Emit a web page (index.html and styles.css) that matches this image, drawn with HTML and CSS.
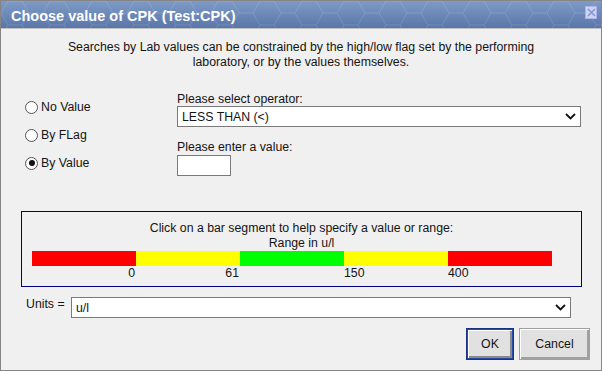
FILE: index.html
```html
<!DOCTYPE html>
<html lang="en">

<head>
    <meta charset="UTF-8">
    <meta name="viewport" content="width=device-width, initial-scale=1.0">
    <title>Choose value of CPK</title>
    <link rel="stylesheet" href="styles.css">
</head>

<body>
    <div class="window">
        <div class="titlebar">
            <span class="title">Choose value of CPK (Test:CPK)</span>
            <span class="close">
                <svg width="9" height="9" viewBox="0 0 9 9">
                    <path d="M1 1 L8 8 M8 1 L1 8" stroke="#7d8fd8" stroke-width="1.4" fill="none"/>
                </svg>
            </span>
        </div>

        <div class="content">
            <p class="intro">Searches by Lab values can be constrained by the high/low flag set by the performing<br>laboratory, or by the values themselves.</p>

            <div class="options">
                <div class="radios">
                    <div class="radio-row"><span class="radio"></span>No Value</div>
                    <div class="radio-row"><span class="radio"></span>By FLag</div>
                    <div class="radio-row"><span class="radio checked"></span>By Value</div>
                </div>
                <div class="fields">
                    <div class="field-label">Please select operator:</div>
                    <div class="select">
                        <span>LESS THAN (&lt;)</span>
                        <svg width="11" height="7" viewBox="0 0 11 7">
                            <path d="M1 1 L5.5 5.5 L10 1" stroke="#111" stroke-width="1.8" fill="none"/>
                        </svg>
                    </div>
                    <div class="field-label second">Please enter a value:</div>
                    <div class="value-input"></div>
                </div>
            </div>

            <div class="range-box">
                <div class="range-text">Click on a bar segment to help specify a value or range:</div>
                <div class="range-text">Range in u/l</div>
                <div class="bar">
                    <span class="seg red"></span>
                    <span class="seg yellow"></span>
                    <span class="seg green"></span>
                    <span class="seg yellow"></span>
                    <span class="seg red"></span>
                </div>
                <div class="bar-labels">
                    <span class="right">0</span>
                    <span class="right">61</span>
                    <span></span>
                    <span>150</span>
                    <span>400</span>
                </div>
            </div>

            <div class="units-row">
                <span class="units-label">Units =</span>
                <div class="select units">
                    <span>u/l</span>
                    <svg width="11" height="7" viewBox="0 0 11 7">
                        <path d="M1 1 L5.5 5.5 L10 1" stroke="#111" stroke-width="1.8" fill="none"/>
                    </svg>
                </div>
            </div>

            <div class="buttons">
                <button class="btn default">OK</button>
                <button class="btn">Cancel</button>
            </div>
        </div>
    </div>
</body>

</html>
```

FILE: styles.css
```css
body {
    margin: 0;
    font-family: "Liberation Sans", Arial, sans-serif;
    font-size: 12.3px;
    color: #141414;
}

.window {
    width: 602px;
    height: 371px;
    box-sizing: border-box;
    border: 1px solid #858585;
    background-color: #f0f0f0;
    display: flex;
    flex-direction: column;
}

.titlebar {
    height: 27px;
    display: flex;
    align-items: center;
    padding: 0 4px 0 10px;
    border-bottom: 1px solid #c2c2c2;
    background-color: #6784b5;
    background-image:
        url("data:image/svg+xml,%3Csvg xmlns='http://www.w3.org/2000/svg' width='42' height='24'%3E%3Cpath d='M0 12 L7 0 H21 L28 12 L21 24 H7 Z M28 12 H42' stroke='%23ffffff' stroke-opacity='0.12' fill='none'/%3E%3C/svg%3E"),
        linear-gradient(#7e9bc7, #5a76a9);
}

.title {
    color: #fff;
    font-weight: bold;
    font-size: 14.5px;
    margin-top: 2px;
}

.close {
    margin-left: auto;
    align-self: flex-start;
    margin-top: 5px;
    width: 10px;
    height: 11px;
    border: 1px solid #a9b4e8;
    background-color: #cdd4f2;
    display: flex;
    align-items: center;
    justify-content: center;
}

.content {
    flex: 1;
    padding-top: 11px;
    display: flex;
    flex-direction: column;
}

.intro {
    margin: 0;
    text-align: center;
    line-height: 15px;
}

.options {
    display: flex;
    margin-top: 23px;
    height: 84px;
}

.radios {
    width: 176px;
    box-sizing: border-box;
    padding-left: 24px;
}

.radio-row {
    height: 28px;
    display: flex;
    align-items: center;
    gap: 3px;
}

.radio {
    width: 11px;
    height: 11px;
    border: 1px solid #555;
    border-radius: 50%;
    background-color: #fff;
    display: flex;
    align-items: center;
    justify-content: center;
}

.radio.checked::after {
    content: "";
    width: 6px;
    height: 6px;
    border-radius: 50%;
    background-color: #111;
}

.fields {
    width: 404px;
}

.field-label {
    line-height: 13px;
}

.field-label.second {
    margin-top: 13px;
    line-height: 14px;
    margin-bottom: 1px;
}

.select {
    height: 21px;
    box-sizing: border-box;
    border: 1px solid #7a7a7a;
    background-color: #fff;
    display: flex;
    align-items: center;
    justify-content: space-between;
    padding: 0 4px 0 4px;
}

.value-input {
    width: 54px;
    height: 21px;
    box-sizing: border-box;
    border: 1px solid #7a7a7a;
    background-color: #fff;
}

.range-box {
    margin: 34px 0 0 20px;
    width: 561px;
    box-sizing: border-box;
    border: 1px solid #00007f;
    padding: 9px 0 6px;
}

.range-text {
    text-align: center;
    line-height: 15px;
}

.bar {
    display: flex;
    margin-left: 10px;
    height: 15px;
}

.seg {
    width: 104px;
}

.red {
    background-color: #ff0000;
}

.yellow {
    background-color: #ffff00;
}

.green {
    background-color: #00ff00;
}

.bar-labels {
    display: grid;
    grid-template-columns: repeat(5, 104px);
    margin-left: 10px;
    line-height: 14px;
}

.bar-labels .right {
    text-align: right;
    padding-right: 1px;
}

.units-row {
    display: flex;
    align-items: flex-start;
    margin-top: 10px;
    padding-left: 25px;
}

.units-label {
    width: 45px;
    line-height: 15px;
}

.select.units {
    width: 500px;
}

.buttons {
    display: flex;
    justify-content: flex-end;
    gap: 5px;
    margin-top: 10px;
    padding-right: 11px;
}

.btn {
    height: 32px;
    box-sizing: border-box;
    font-family: "Liberation Sans", Arial, sans-serif;
    font-size: 12.3px;
    color: #141414;
    background-color: #e1e1e1;
    border: 1px solid #a0a0a0;
    box-shadow: inset 1px 1px #fff, inset -2px -2px #a0a0a0;
    padding: 0;
    width: 71px;
}

.btn.default {
    width: 48px;
    border: 2px solid #2a4aa8;
    box-shadow: inset 1px 1px #fff, inset -2px -2px #8a8a8a;
    outline: 1px solid #1c3380;
    outline-offset: -1px;
}
```
